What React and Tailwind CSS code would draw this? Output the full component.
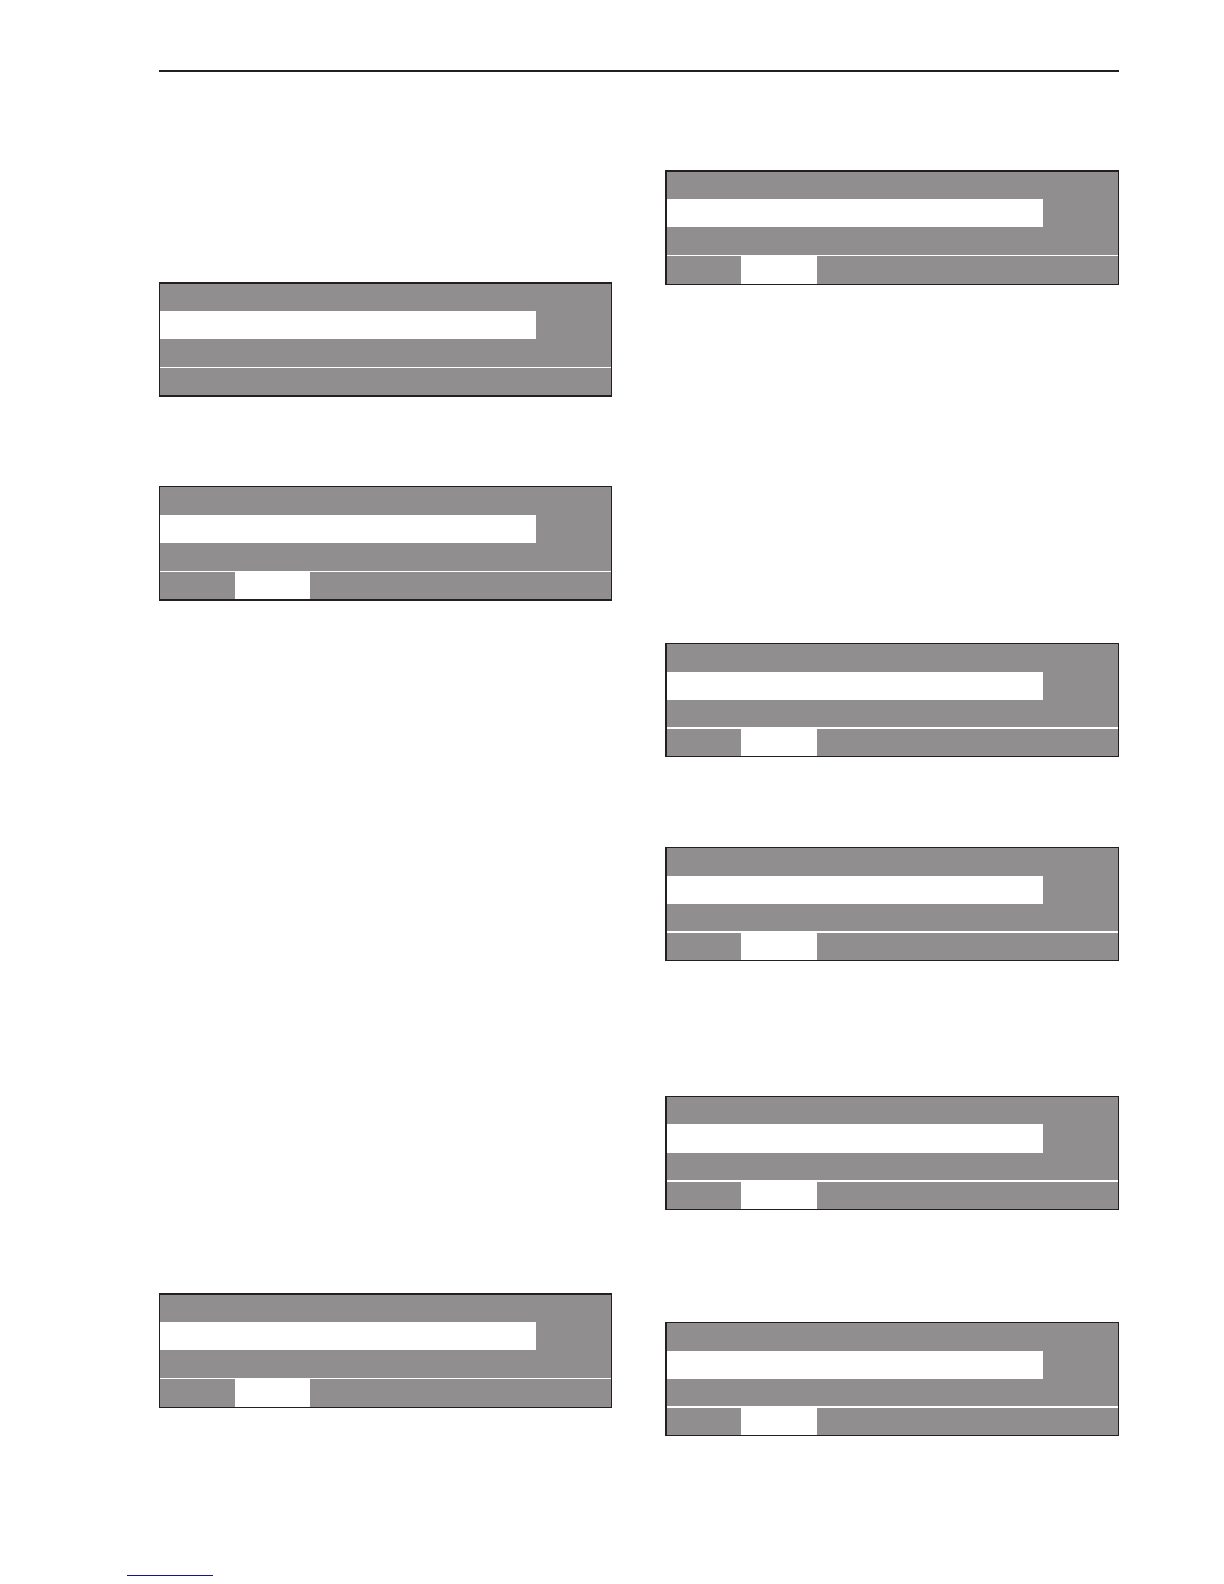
const GRAY = 'bg-[#908e8f]';

/* Four-line display: heading, highlighted line, third line, key bar. */
function Display({ className, rows = 'grid-rows-[28px_28px_28px_27px]', line = 'border-t', keys }) {
  return (
    <section className={`grid border-[#231f20] ${rows} ${className}`}>
      <div className={GRAY} />
      <div className="grid grid-cols-[376fr_75fr] bg-white">
        <div />
        <div className={GRAY} />
      </div>
      <div className={GRAY} />
      <div className={`grid border-white bg-white ${line} ${keys || 'grid-cols-1'}`}>
        <div className={GRAY} />
        {keys && <div />}
        {keys && <div className={GRAY} />}
      </div>
    </section>
  );
}

const LEFT_KEYS = 'grid-cols-[75fr_75fr_301fr]';
const RIGHT_KEYS = 'grid-cols-[74fr_76fr_301fr]';

export default function App() {
  return (
    <div className="min-h-screen bg-white pt-[70px] pb-2">
      <main className="ml-[159px] mr-[105px]">
        <hr className="border-0 border-t-2 border-[#231f20]" />
        <div className="grid grid-cols-[453fr_454fr] gap-[53px]">
          <div className="flex flex-col">
            <Display className="mt-[210px] border-x border-y-2" rows="grid-rows-[27px_28px_28px_28px]" />
            <Display className="mt-[89px] border border-b-2" rows="grid-rows-[28px_28px_28px_28px]" keys={LEFT_KEYS} />
            <Display className="mt-[692px] border border-t-2" rows="grid-rows-[27px_28px_28px_29px]" keys={LEFT_KEYS} />
          </div>
          <div className="flex flex-col">
            <Display className="mt-[98px] border border-t-2 border-l-2" rows="grid-rows-[27px_28px_28px_29px]" keys={RIGHT_KEYS} />
            <Display className="mt-[358px] border border-l-2" rows="grid-rows-[28px_28px_27px_29px]" line="border-t-2" keys={RIGHT_KEYS} />
            <Display className="mt-[90px] border border-l-2" rows="grid-rows-[28px_28px_27px_29px]" line="border-t-2" keys={RIGHT_KEYS} />
            <Display className="mt-[135px] border border-l-2" rows="grid-rows-[27px_29px_27px_29px]" line="border-t-2" keys={RIGHT_KEYS} />
            <Display className="mt-[112px] border border-l-2" rows="grid-rows-[28px_28px_27px_29px]" line="border-t-2" keys={RIGHT_KEYS} />
          </div>
        </div>
      </main>
      <footer className="mt-[123px] ml-[127px]">
        <a href="#" aria-label="Home" className="block h-[17px] w-[86px] border-b border-[#0a1a8c]" />
      </footer>
    </div>
  );
}
